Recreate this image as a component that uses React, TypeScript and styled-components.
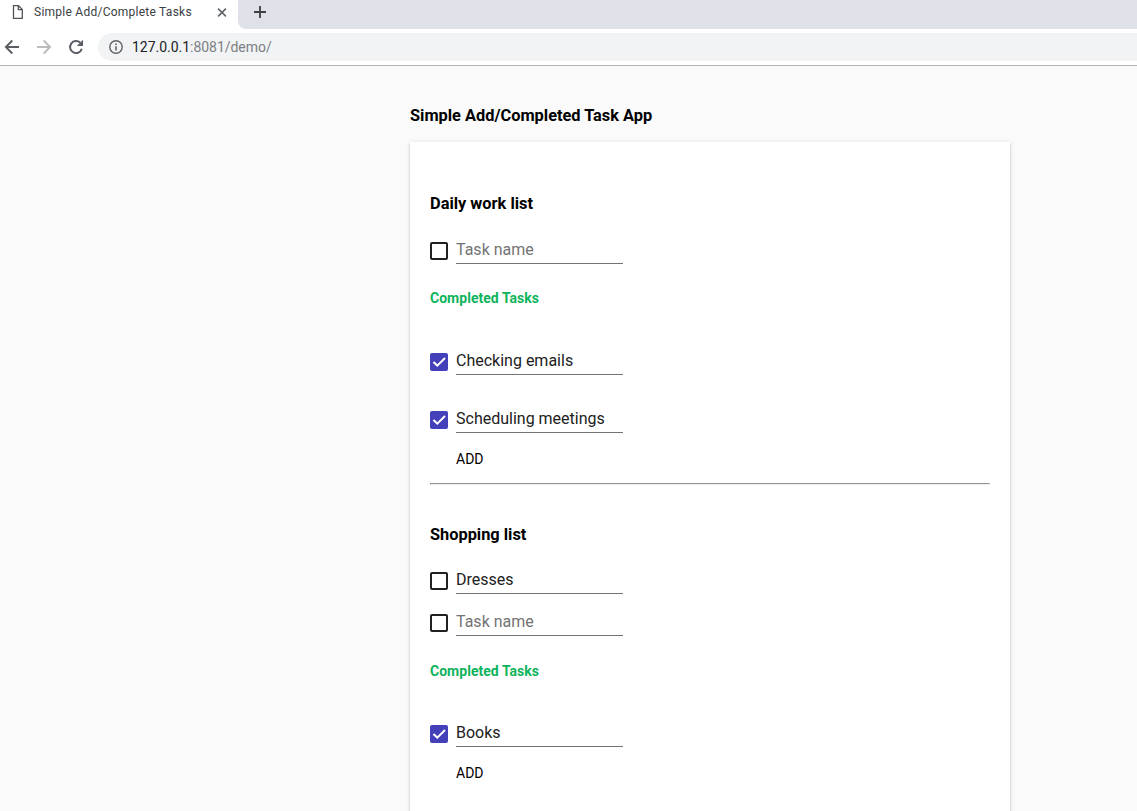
import React from "react";
import styled, { createGlobalStyle } from "styled-components";

const GlobalStyle = createGlobalStyle`
  * { box-sizing: border-box; }
  body {
    margin: 0;
    background: #fafafa;
    font-family: Roboto, "Liberation Sans", sans-serif;
    overflow: hidden;
  }
`;

const Window = styled.div`
  height: 811px;
  overflow: hidden;
  background: #fafafa;
`;

const Browser = styled.header`
  height: 66px;
  background: #fff;
  border-bottom: 1px solid #b3b4b6;
`;

const TabStrip = styled.div`
  display: flex;
  height: 29px;
`;

const Tab = styled.div`
  display: flex;
  align-items: center;
  width: 238px;
  height: 24px;
  padding-left: 12px;
  background: #fff;
`;

const TabTitle = styled.span`
  width: 183px;
  margin-left: 11px;
  font-size: 12px;
  letter-spacing: 0.25px;
  line-height: 24px;
  color: #3c4043;
  white-space: nowrap;
`;

const StripRest = styled.div`
  flex: 1;
  padding: 6px 0 0 16px;
  background: #dee1e8;
  border-bottom-left-radius: 8px;

  svg { display: block; }
`;

const Toolbar = styled.nav`
  display: flex;
  align-items: center;
  height: 36px;
  padding-left: 4px;
`;

const NavIcon = styled.svg<{ $gap: number }>`
  flex: none;
  margin-right: ${(p) => p.$gap}px;
`;

const AddressBar = styled.div`
  display: flex;
  align-items: center;
  flex: 1;
  height: 28px;
  padding-left: 11px;
  background: #f1f3f4;
  border-radius: 14px 0 0 14px;
`;

const Url = styled.span`
  margin-left: 9px;
  font-size: 14px;
  letter-spacing: -0.03px;
  line-height: 28px;
  color: #7b8085;
`;

const Host = styled.span`
  color: #202124;
`;

const Page = styled.main`
  width: 600px;
  margin: 0 auto 0 410px;
  padding-top: 40px;
`;

const Title = styled.h1`
  margin: 0;
  font-size: 16.38px;
  font-weight: 700;
  line-height: 20px;
  color: #000;
`;

const Card = styled.div`
  height: 720px;
  margin-top: 16px;
  padding: 52px 20px 20px;
  background: #fff;
  box-shadow: 0 2px 2px 0 rgba(0, 0, 0, 0.14), 0 1px 5px 0 rgba(0, 0, 0, 0.12),
    0 3px 1px -2px rgba(0, 0, 0, 0.2);
`;

const ListTitle = styled.h2<{ $gap: number }>`
  margin: 0 0 ${(p) => p.$gap}px;
  font-size: 16.38px;
  font-weight: 700;
  line-height: 20px;
  color: #000;
`;

const Rows = styled.div<{ $gap: number }>`
  display: flex;
  flex-direction: column;
  gap: ${(p) => p.$gap}px;
`;

const Row = styled.div`
  display: flex;
  align-items: center;
  gap: 8px;
  height: 26px;
`;

const Box = styled.span<{ $checked: boolean }>`
  display: block;
  flex: none;
  width: 18px;
  height: 18px;
  border: 2px solid ${(p) => (p.$checked ? "#4340b9" : "#212121")};
  border-radius: 2px;
  background: ${(p) => (p.$checked ? "#4340b9" : "transparent")};

  svg { display: block; }
`;

const Field = styled.span<{ $empty: boolean }>`
  width: 167px;
  height: 26px;
  border-bottom: 1px solid #737373;
  font-size: 16px;
  line-height: 24px;
  color: ${(p) => (p.$empty ? "#737373" : "#212121")};
`;

const CompletedTitle = styled.h3<{ $before: number; $after: number }>`
  margin: ${(p) => p.$before}px 0 ${(p) => p.$after}px;
  font-size: 14px;
  font-weight: 700;
  letter-spacing: 0.03px;
  line-height: 20px;
  color: #0fb35c;
`;

const AddButton = styled.button`
  display: block;
  margin: 16px 0 0 26px;
  padding: 0;
  border: 0;
  background: none;
  font-family: inherit;
  font-size: 14px;
  line-height: 20px;
  color: #000;
`;

const Divider = styled.hr`
  height: 2px;
  margin: 14px 0 40px;
  border: 1px solid;
  border-color: #949494 #eee #eee #949494;
`;

interface TaskProps {
  name?: string;
  checked?: boolean;
}

const Task = ({ name, checked = false }: TaskProps) => (
  <Row>
    <Box $checked={checked}>
      {checked && (
        <svg width="14" height="14" viewBox="0 0 14 14" fill="none">
          <path d="M1.4 6.9L5.3 10.6L13 3" stroke="#fff" strokeWidth="2" />
        </svg>
      )}
    </Box>
    <Field $empty={!name}>{name ?? "Task name"}</Field>
  </Row>
);

interface ListProps {
  title: string;
  titleGap: number;
  completedGap: [number, number];
  open: (string | undefined)[];
  done: string[];
}

const TaskList = ({ title, titleGap, completedGap, open, done }: ListProps) => (
  <section>
    <ListTitle $gap={titleGap}>{title}</ListTitle>
    <Rows $gap={16}>
      {open.map((name, i) => (
        <Task key={i} name={name} />
      ))}
    </Rows>
    <CompletedTitle $before={completedGap[0]} $after={completedGap[1]}>
      Completed Tasks
    </CompletedTitle>
    <Rows $gap={32}>
      {done.map((name) => (
        <Task key={name} name={name} checked />
      ))}
    </Rows>
    <AddButton>ADD</AddButton>
  </section>
);

export default function App() {
  return (
    <Window>
      <GlobalStyle />
      <Browser>
        <TabStrip>
          <Tab>
            <svg width="11" height="14" viewBox="0 0 11 14" fill="none" stroke="#505357" strokeWidth="1.3">
              <path d="M1.5 .7H6.5L10.3 4.4V13.3H1.5Z" />
              <path d="M6.3 .9V4.7H10" />
            </svg>
            <TabTitle>Simple Add/Complete Tasks</TabTitle>
            <svg width="10" height="9" viewBox="0 0 10 9" stroke="#5f6368" strokeWidth="1.5">
              <path d="M1.1 .6L8.9 8.4M8.9 .6L1.1 8.4" />
            </svg>
          </Tab>
          <StripRest>
            <svg width="12" height="12" viewBox="0 0 12 12" stroke="#3c4043" strokeWidth="1.8">
              <path d="M6 0V12M0 6H12" />
            </svg>
          </StripRest>
        </TabStrip>
        <Toolbar>
          <NavIcon $gap={16} width="16" height="16" viewBox="0 0 16 16" fill="none" stroke="#5a5e64" strokeWidth="1.9">
            <path d="M15 8H2M8.3 1.5L1.9 8L8.3 14.5" />
          </NavIcon>
          <NavIcon $gap={16} width="16" height="16" viewBox="0 0 16 16" fill="none" stroke="#babcbe" strokeWidth="1.9">
            <path d="M1 8H14M7.7 1.5L14.1 8L7.7 14.5" />
          </NavIcon>
          <NavIcon $gap={14} width="16" height="16" viewBox="0 0 16 16" fill="none" stroke="#5a5e64" strokeWidth="2">
            <path d="M13.8 9.8A6 6 0 1 1 12.3 3.8" />
            <path d="M15 .8V7H8.8Z" fill="#5a5e64" stroke="none" />
          </NavIcon>
          <AddressBar>
            <svg width="14" height="14" viewBox="0 0 14 14" fill="none" stroke="#5f6368" strokeWidth="1.4">
              <circle cx="7" cy="7" r="6.2" />
              <path d="M7 6.2V10.6M7 3.4V5" strokeWidth="1.6" />
            </svg>
            <Url>
              <Host>127.0.0.1</Host>:8081/demo/
            </Url>
          </AddressBar>
        </Toolbar>
      </Browser>
      <Page>
        <Title>Simple Add/Completed Task App</Title>
        <Card>
          <TaskList
            title="Daily work list"
            titleGap={24}
            completedGap={[24, 41]}
            open={[undefined]}
            done={["Checking emails", "Scheduling meetings"]}
          />
          <Divider />
          <TaskList
            title="Shopping list"
            titleGap={23}
            completedGap={[25, 40]}
            open={["Dresses", undefined]}
            done={["Books"]}
          />
        </Card>
      </Page>
    </Window>
  );
}
